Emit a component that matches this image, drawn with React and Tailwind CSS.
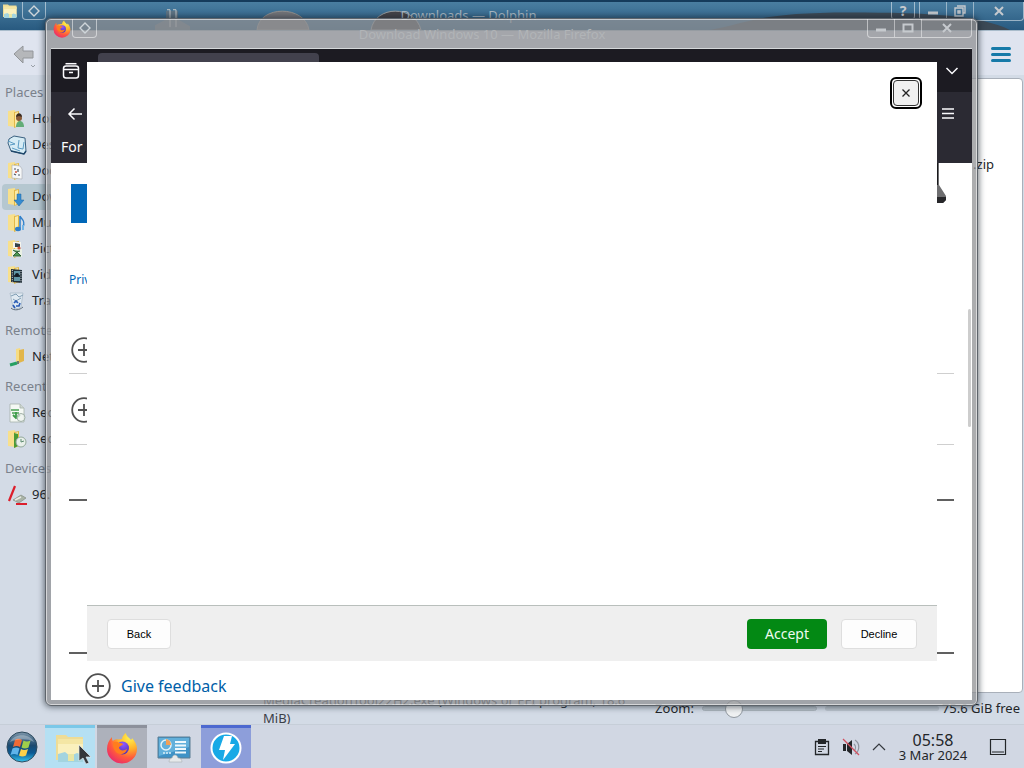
import React from "react";

function FolderIcon({ children }) {
  return (
    <svg viewBox="0 0 20 20" className="size-5 shrink-0" aria-hidden="true">
      <path d="M1 2l7-1v17l-7-1z" fill="#f8e08c" />
      <path d="M7 3l5-1v15l-5 2z" fill="#e2b848" />
      <path d="M8 4l3-1v13l-3 2z" fill="#fbeaa6" />
      {children}
    </svg>
  );
}

const HomeIcon = () => (
  <FolderIcon>
    <path d="M9 18c0-4 2-6 4-6s4 2 4 6z" fill="#63ad78" />
    <circle cx="12" cy="9" r="3" fill="#8a5c38" />
    <path d="M9 8c0-5 6-5 6 0l-3-1z" fill="#3b2b20" />
  </FolderIcon>
);

const DesktopIcon = () => (
  <svg viewBox="0 0 20 20" className="size-5 shrink-0" aria-hidden="true">
    <path d="M2 4l5-3 11 2 1 13-2 3-13-3-3-8z" fill="#d6ecf5" stroke="#3b6180" />
    <path d="M1 6l7 3-5 1M12 5l-1 8 5 1 1-7M5 13l8 3" fill="none" stroke="#5b9cc4" strokeWidth="1" />
    <path d="M4 16l13 3 2-3" fill="none" stroke="#20486b" strokeWidth="1.500" />
  </svg>
);

const DocumentsIcon = () => (
  <FolderIcon>
    <path d="M5 4l8 1 2 3v10l-10-1z" fill="#f5f7f8" stroke="#a7adb3" strokeWidth=".6" />
    <path d="M7 8h2M11 8v3M7 13l2 1M11 14h2" stroke="#4b5560" strokeWidth="1.200" />
    <circle cx="9" cy="11" r="1" fill="#d4543a" />
  </FolderIcon>
);

const DownloadsIcon = () => (
  <FolderIcon>
    <path d="M10 7h4v6h3l-5 6-5-6h3z" fill="#358cd1" stroke="#1d65a3" strokeWidth=".5" />
  </FolderIcon>
);

const MusicIcon = () => (
  <FolderIcon>
    <path d="M13 3v12M13 3c1 3 6 4 3 11" fill="none" stroke="#2f7fca" strokeWidth="1.500" />
    <ellipse cx="11" cy="16" rx="3" ry="2.200" fill="#2f7fca" />
    <path d="M16 12v5" stroke="#72b4e6" strokeWidth="2" />
  </FolderIcon>
);

const PicturesIcon = () => (
  <FolderIcon>
    <path d="M6 3h8v6H6z" fill="#f4f4ee" />
    <path d="M8 4l5 1v3H8z" fill="#34424a" />
    <path d="M5 10h10v8H5z" fill="#e9f0e4" />
    <path d="M6 11l3 2 4-1M6 17l4-4 4 4z" fill="#4f9a52" stroke="#305f3a" />
    <circle cx="12" cy="9" r="1.600" fill="#d05238" />
  </FolderIcon>
);

const VideosIcon = () => (
  <FolderIcon>
    <path d="M4 4l11 1v13l-11-1z" fill="#22303a" />
    <path d="M7 6h6v4H7zM7 12h6v4H7z" fill="#5f96a5" />
    <path d="M5.300 5v12M14 6v12" stroke="#d7dfdf" strokeDasharray="1 1.300" />
    <circle cx="10" cy="10" r="2" fill="#101a22" />
  </FolderIcon>
);

const TrashIcon = () => (
  <svg viewBox="0 0 20 20" className="size-5 shrink-0" aria-hidden="true">
    <path d="M3 2h13l-2 14c-2 2-6 2-8 0z" fill="#dfe9f1" stroke="#a9bac8" strokeWidth=".8" />
    <path d="M4 5l5-2 3 3 4-2M6 8l3 2 5-3" fill="none" stroke="#7f9db4" />
    <path d="M7 12l2-2 2 2M13 12l-1 3-3 0M6 14l2 3" fill="none" stroke="#2a5cb6" strokeWidth="1.700" />
    <path d="M4 17c3 3 9 2 12-1" fill="none" stroke="#5c6b79" />
  </svg>
);

const NetworkIcon = () => (
  <svg viewBox="0 0 20 20" className="size-5 shrink-0" aria-hidden="true">
    <path d="M9 2l4-1v13l-4 1z" fill="#f6dc83" />
    <path d="M12 3l5-1v12l-5 2z" fill="#e2b64b" />
    <path d="M11 14v3" stroke="#6c7d72" strokeWidth="2" />
    <path d="M3 18l7-2" stroke="#26a062" strokeWidth="3" />
  </svg>
);

const RecentFilesIcon = () => (
  <svg viewBox="0 0 20 20" className="size-5 shrink-0" aria-hidden="true">
    <path d="M3 1h10l4 4v14H3z" fill="#f4f8f4" stroke="#a6b1ab" strokeWidth=".8" />
    <path d="M13 1v4h4" fill="#cfd8d2" stroke="#a6b1ab" strokeWidth=".8" />
    <path d="M4 7h8M5 10h7" stroke="#73b67a" strokeWidth="2" />
    <path d="M9 9v5M6 12l3 3 4-3" fill="none" stroke="#3c9c48" strokeWidth="1.800" />
    <circle cx="14" cy="14.500" r="4" fill="#edf2ee" fillOpacity=".7" stroke="#9fb0a6" />
  </svg>
);

const RecentPlacesIcon = () => (
  <FolderIcon>
    <path d="M7 4l4 1v12l-4 2z" fill="#4b9b35" />
    <circle cx="14" cy="13" r="5" fill="#e8efe9" stroke="#93a99b" />
    <path d="M14 10v3l3-1" fill="none" stroke="#5d8b70" />
  </FolderIcon>
);

const DiskIcon = () => (
  <svg viewBox="0 0 20 20" className="size-5 shrink-0" aria-hidden="true">
    <path d="M6 15l8-5 5 3-7 5z" fill="#a9b3a6" stroke="#7d877a" strokeWidth=".6" />
    <path d="M8 15l6-3" stroke="#e8ece5" strokeWidth="1.500" />
    <path d="M8 1L2 16M9 19h11" stroke="#dc1f2c" strokeWidth="2.200" />
  </svg>
);

function FirefoxIcon({ className, id }) {
  return (
    <svg viewBox="0 0 32 32" className={className} aria-hidden="true">
      <defs>
        <radialGradient id={id + "-flame"} cx="75%" cy="15%" r="95%">
          <stop offset="0" stopColor="#fff44f" />
          <stop offset=".4" stopColor="#ffb02a" />
          <stop offset=".7" stopColor="#ff5a3c" />
          <stop offset="1" stopColor="#e92a6d" />
        </radialGradient>
        <radialGradient id={id + "-globe"} cx="55%" cy="20%" r="80%">
          <stop offset="0" stopColor="#9059ff" />
          <stop offset="1" stopColor="#4a2fb5" />
        </radialGradient>
      </defs>
      <path
        d="M20 1c0 3 3 4.500 5 7 1-1 1-2 1-2 3 3 5 7 5 11a15 14.500 0 0 1-30 0C1 12 3 8 6 5c0 2 0 3 1 4 1-1 3-2 5-1.500 2-.5 3 0 4-.5 0-2 2-5 4-6z"
        fill={"url(#" + id + "-flame)"}
      />
      <circle cx="16.500" cy="16" r="6.500" fill={"url(#" + id + "-globe)"} />
      <path d="M7 11c2-2 5-1 6 0 2 0 3 0 4 1-1 2-4 2-4 4 1 3 5 3 8 1-1 5-7 7-11 3-2-2-3-5-3-9z" fill="#ff7d1e" />
    </svg>
  );
}

const FoldersIcon = ({ className }) => (
  <svg viewBox="0 0 32 32" className={className} aria-hidden="true">
    <path d="M2 3h10l2 2h15v23H2z" fill="#eedc96" />
    <path d="M4 8h25v20H4z" fill="#faf0bd" />
    <path d="M4 7h25v5H4z" fill="#f4e6a4" />
    <path d="M4 22l7-2 5 4 7-3 6 2v7H4z" fill="#a3d4df" />
    <path d="M14 22h6v7h-6z" fill="#e9e6a4" />
  </svg>
);

const StartIcon = () => (
  <svg viewBox="0 0 32 32" className="size-8" aria-hidden="true">
    <defs>
      <linearGradient id="orb" x1="0" y1="0" x2="0" y2="1">
        <stop offset="0" stopColor="#7e97aa" />
        <stop offset=".45" stopColor="#1c4a70" />
        <stop offset=".7" stopColor="#0a5a94" />
        <stop offset="1" stopColor="#35c6ef" />
      </linearGradient>
    </defs>
    <circle cx="16" cy="16" r="15" fill="url(#orb)" stroke="#2d4a5e" />
    <path d="M9 9c3-2 5-1 7 0l-2 7c-2-1-4-1.500-7 0z" fill="#ee6a35" />
    <path d="M17.500 9.500c2 1 4 1.500 7 0l-2 7c-3 1.500-5 1-7 0z" fill="#9fce4b" />
    <path d="M6.500 17.500c3-1.500 5-1 7 0l-2 6.500c-2-1-4-1.500-7 0z" fill="#5fb4ea" />
    <path d="M15 18c2 1 4 1.500 7 0l-2 6.500c-3 1.500-5 1-7 0z" fill="#fbd04a" />
    <path d="M4 11C8 2 24 2 28 11c-7-4-17-3-24 0z" fill="#fff" fillOpacity=".3" />
  </svg>
);

const ControlPanelIcon = () => (
  <svg viewBox="0 0 34 32" className="h-8 w-9" aria-hidden="true">
    <path d="M1 5h32v21H1z" fill="#3f92c6" stroke="#5d7f94" />
    <path d="M2 6h30v9L2 24z" fill="#62b0db" />
    <circle cx="9" cy="13" r="5" fill="none" stroke="#e4f4fb" strokeWidth="1.500" />
    <path d="M9 13V7a6 6 0 0 1 5 6z" fill="#f0a058" />
    <path d="M18 10h11M18 13.500h11M18 17h11M18 20.500h11" stroke="#eef8fc" strokeWidth="2" />
    <path d="M6 21h8" stroke="#d7eef8" strokeWidth="1.500" strokeDasharray="2 1" />
    <path d="M12 30c0-3 2-4 3-4 1-4 5-4 6 0 2 0 4 1 4 4z" fill="#e6e9ea" stroke="#a7aeb2" strokeWidth=".6" />
  </svg>
);

const BoltIcon = () => (
  <svg viewBox="0 0 32 32" className="size-8" aria-hidden="true">
    <circle cx="16" cy="16" r="14.500" fill="#18a9e6" stroke="#fff" strokeWidth="2" />
    <path d="M14 4h8l-2 8h5L13 28l2-10H9z" fill="#fff" />
  </svg>
);

const PlusCircle = () => (
  <svg viewBox="0 0 26 26" className="size-[26px] shrink-0" fill="none" stroke="#505050" strokeWidth="1.800" aria-hidden="true">
    <circle cx="13" cy="13" r="11.800" />
    <path d="M13 7v12M7 13h12" />
  </svg>
);

const Diamond = () => (
  <svg viewBox="0 0 12 12" className="size-3" fill="none" stroke="#cfd6da" strokeWidth="1.400" aria-hidden="true">
    <path d="M6 1l5 5-5 5-5-5z" />
  </svg>
);

function Glyph({ kind }) {
  return (
    <svg viewBox="0 0 14 12" className="h-3 w-3.5" fill="none" stroke="#c6cace" strokeWidth="2" aria-hidden="true">
      {kind === "min" && <path d="M2 8h10" strokeWidth="3" />}
      {kind === "max" && <path d="M2.500 2.500h9v7h-9z" />}
      {kind === "restore" && (
        <g strokeWidth="1.400">
          <path d="M4 1h8v7h-2" />
          <path d="M2 3h8v8H2zM5 6h2v2H5z" />
        </g>
      )}
      {kind === "close" && <path d="M3 2l8 8M11 2l-8 8" />}
    </svg>
  );
}

function WindowButtons({ middle, label }) {
  const cell = "flex w-[27px] items-center justify-center border-r border-white/45";
  return (
    <div className="flex h-[19px] rounded-b border border-t-0 border-white/50">
      <button aria-label={"Minimize " + label} className={cell}><Glyph kind="min" /></button>
      <button aria-label={"Resize " + label} className={cell}><Glyph kind={middle} /></button>
      <button aria-label={"Close " + label} className="flex w-[49px] items-center justify-center"><Glyph kind="close" /></button>
    </div>
  );
}

const sections = [
  { title: "Places", items: [["Home", HomeIcon], ["Desktop", DesktopIcon], ["Documents", DocumentsIcon], ["Downloads", DownloadsIcon], ["Music", MusicIcon], ["Pictures", PicturesIcon], ["Videos", VideosIcon], ["Trash", TrashIcon]] },
  { title: "Remote", items: [["Network", NetworkIcon]] },
  { title: "Recent", items: [["Recent Files", RecentFilesIcon], ["Recent Locations", RecentPlacesIcon]] },
  { title: "Devices", items: [["96.0 GiB", DiskIcon]] },
];

function Sidebar() {
  return (
    <nav className="w-[200px] shrink-0 pt-px text-[13px]">
      {sections.map((s) => (
        <section key={s.title}>
          <h2 className="h-[30px] pt-[3px] pl-[5px] leading-[26px] text-[#7b828c]">{s.title}</h2>
          <ul>
            {s.items.map(([name, Icon]) => (
              <li key={name}>
                <a href="#" className={"ml-0.5 flex h-[26px] items-center gap-[5px] pl-[5px] " + (name === "Downloads" ? "rounded bg-[#b5c7d0]" : "")}>
                  <Icon />
                  {name}
                </a>
              </li>
            ))}
          </ul>
        </section>
      ))}
    </nav>
  );
}

function FileManager() {
  return (
    <div className="flex min-h-0 flex-1 flex-col">
      <header className="relative flex h-[31px] shrink-0 items-start border-t-2 border-b border-t-[#153b5c] border-b-[#a9bccb] bg-linear-to-b from-[#4a7ea1] to-[#285a80]">
        <svg className="absolute inset-0 size-full" viewBox="0 0 1024 29" preserveAspectRatio="none" aria-hidden="true">
          <path d="M155 24l11-6V9h12v9l12 7v4h-35z" fill="#75767a" fillOpacity=".6" />
          <path d="M167 8h3v18M173 8h3v18" stroke="#c5c8c9" fill="none" />
          <path d="M257 29c2-26 48-26 52 0z" fill="#74757a" stroke="#95928e" />
          <path d="M371 29c4-26 44-26 50 0z" fill="#454347" stroke="#9a9c9c" />
          <path d="M710 29c40-8 50-18 140-18 80 0 130 3 160 18z" fill="#3c4955" />
        </svg>
        <div className="relative flex w-full items-start">
          <FoldersIcon className="mt-px ml-0.5 h-4 w-4" />
          <button aria-label="Keep window in view" className="ml-1 flex h-[18px] w-6 items-center justify-center rounded-b border border-t-0 border-white/50"><Diamond /></button>
          <h1 className="flex-1 pt-1 text-center text-[13px] leading-[18px] text-[#a9b8c2]">Downloads — Dolphin</h1>
          <button aria-label="Help" className="mr-1 h-[18px] w-6 rounded-b border border-t-0 border-white/50 text-[14px] leading-[16px] font-bold text-[#c6cace]">?</button>
          <WindowButtons middle="restore" label="Dolphin" />
        </div>
      </header>
      <div className="flex h-11 shrink-0 items-start justify-between bg-[#dfe4ef] pt-3 pr-[13px] pl-3">
        <button aria-label="Back">
          <svg viewBox="0 0 26 26" className="size-[26px]" aria-hidden="true">
            <path d="M2 11L11 3v5h10v7H11v5z" fill="#b5b7ba" stroke="#93969a" />
            <path d="M19 22l2 2 2-2" fill="none" stroke="#9aa0a8" />
          </svg>
        </button>
        <button aria-label="Menu" className="flex flex-col gap-[3px] pt-1">
          <span className="h-[3px] w-5 rounded bg-[#167aa8]" />
          <span className="h-[3px] w-5 rounded bg-[#167aa8]" />
          <span className="h-[3px] w-5 rounded bg-[#167aa8]" />
        </button>
      </div>
      <div className="flex min-h-0 flex-1">
        <Sidebar />
        <main className="mt-[3px] mr-px flex flex-1 items-start justify-end rounded border border-[#a9b0ba] bg-white pt-[75px] pr-7 text-[13px] leading-5">.zip</main>
      </div>
      <footer className="flex h-[31px] shrink-0 items-center pr-1 pl-[263px] text-[13px]">
        <p className="max-w-[376px] flex-1 leading-[18px] text-[#3b4048]">MediaCreationTool22H2.exe (Windows or EFI program, 18.6 MiB)</p>
        <div className="ml-auto flex shrink-0 items-center gap-2">
          <label htmlFor="zoom">Zoom:</label>
          <input
            id="zoom"
            type="range"
            defaultValue="23"
            className="h-[18px] w-[115px] appearance-none bg-transparent [&::-webkit-slider-runnable-track]:h-[5px] [&::-webkit-slider-runnable-track]:rounded [&::-webkit-slider-runnable-track]:border [&::-webkit-slider-runnable-track]:border-[#acb5bd] [&::-webkit-slider-runnable-track]:bg-[#b9c2cb] [&::-webkit-slider-thumb]:-mt-[7px] [&::-webkit-slider-thumb]:size-[18px] [&::-webkit-slider-thumb]:appearance-none [&::-webkit-slider-thumb]:rounded-full [&::-webkit-slider-thumb]:border [&::-webkit-slider-thumb]:border-[#91989f] [&::-webkit-slider-thumb]:bg-[#eff1f2]"
          />
          <div className="flex items-center gap-[3px]">
            <span className="h-[5px] w-[114px] rounded bg-[#bcc5ce]" />
            <span>75.6 GiB free</span>
          </div>
        </div>
      </footer>
    </div>
  );
}

function Browser() {
  return (
    <section className="absolute top-[18px] right-[46px] bottom-[62px] left-[45px] flex flex-col rounded-md border border-[#5e646b] bg-[#909194]/75 px-[5px] pb-[5px] shadow-[0_0_6px_1px_rgba(20,30,40,0.6)] inset-ring inset-ring-white/55">
      <header className="flex h-[29px] shrink-0 items-start">
        <FirefoxIcon id="title-fox" className="mt-px ml-0.5 size-[18px]" />
        <button aria-label="Keep browser in view" className="ml-px flex h-[19px] w-[25px] items-center justify-center rounded-b border border-t-0 border-white/50"><Diamond /></button>
        <h2 className="flex-1 pt-1.5 text-center text-[13px] leading-[18px] text-[#b1b4b7]">Download Windows 10 — Mozilla Firefox</h2>
        <WindowButtons middle="max" label="Firefox" />
      </header>
      <div className="flex min-h-0 flex-1 flex-col border-t border-[#d5d8da] bg-white">
        <div className="flex h-[43px] shrink-0 items-start bg-[#1c1b22] pt-1 pr-[13px] pl-[11px]">
          <button aria-label="Recent browsing" className="mt-[9px]">
            <svg viewBox="0 0 18 18" className="size-[18px]" fill="none" stroke="#fbfbfe" strokeWidth="1.500" aria-hidden="true">
              <path d="M3.500 1.700h11" />
              <rect x="1.500" y="4" width="15" height="12" rx="2.500" />
              <path d="M2 7.500h14M7 10.500h4" />
            </svg>
          </button>
          <div className="ml-[18px] h-9 w-[221px] rounded bg-[#42414d]" />
          <button aria-label="List all tabs" className="mt-[11px] ml-auto">
            <svg viewBox="0 0 14 14" className="size-3.5" fill="none" stroke="#fbfbfe" strokeWidth="1.500" aria-hidden="true"><path d="M1.500 4L7 9.500 12.500 4" /></svg>
          </button>
        </div>
        <div className="flex h-10 shrink-0 items-center justify-between bg-[#2b2a33] pt-[3px] pr-4 pl-4">
          <button aria-label="Go back">
            <svg viewBox="0 0 16 16" className="size-4" fill="none" stroke="#fbfbfe" strokeWidth="1.500" aria-hidden="true"><path d="M15 8H2M7.500 2.500L2 8l5.500 5.500" /></svg>
          </button>
          <button aria-label="Application menu">
            <svg viewBox="0 0 16 16" className="size-4" stroke="#fbfbfe" strokeWidth="1.300" aria-hidden="true"><path d="M2 3h12M2 7.500h12M2 12h12" /></svg>
          </button>
        </div>
        <p className="h-[31px] shrink-0 bg-[#2b2a33] pt-1 pl-2.5 text-[14px] leading-[22px] text-[#fbfbfe]">For</p>
        <div className="flex min-h-0 flex-1 overflow-hidden">
          <div className="flex flex-1 flex-col pl-[18px]">
            <div className="flex items-start justify-between">
              <button aria-label="Download now" className="mt-[21px] ml-0.5 h-[39px] w-48 bg-[#0067b8]" />
              <svg viewBox="0 0 40 40" className="mr-[7px] size-10" aria-hidden="true">
                <path d="M0 0h32v22l7 11v4l-3 3H0z" fill="#6e6e70" />
                <path d="M29 0h2v22h-2z" fill="#19191c" />
                <path d="M0 34h39v3l-3 3H0z" fill="#27272a" />
              </svg>
            </div>
            <a href="#" className="mt-[47px] text-[12px] leading-5 text-[#0067b8]">Privacy</a>
            <button aria-label="Expand first section" className="mt-[47px] ml-0.5 self-start"><PlusCircle /></button>
            <hr className="mt-[10px] border-[#cfcfcf]" />
            <button aria-label="Expand second section" className="mt-[23px] ml-0.5 self-start"><PlusCircle /></button>
            <hr className="mt-[21px] border-[#cfcfcf]" />
            <hr className="mt-[54px] border-t-2 border-[#606060]" />
            <hr className="mt-[151px] border-t-2 border-[#606060]" />
            <a href="#" className="mt-[19px] ml-4 flex items-center gap-[10px] self-start text-[16px] leading-6 text-[#0060a8]">
              <PlusCircle />
              Give feedback
            </a>
          </div>
          <div className="flex w-[18px] shrink-0 justify-end pt-[146px] pr-px">
            <span className="h-[118px] w-[3px] rounded bg-[#cdcdcd]" />
          </div>
        </div>
      </div>
    </section>
  );
}

function InstallerDialog() {
  const plain = "h-[30px] rounded border border-[#dedede] bg-[#fdfdfd] font-['Liberation_Sans',sans-serif] text-[11px] text-black";
  return (
    <div role="dialog" aria-label="License terms" className="absolute top-[62px] right-[87px] bottom-[107px] left-[87px] flex flex-col bg-white">
      <div className="flex flex-1 items-start justify-end pt-[15px] pr-[15px]">
        <button aria-label="Close dialog" className="flex size-8 items-center justify-center rounded-md border-2 border-black bg-white">
          <span className="flex size-[26px] items-center justify-center rounded border border-[#333] bg-[#f0f0f0]">
            <svg viewBox="0 0 10 10" className="size-2.5" stroke="#222" strokeWidth="1.300" aria-hidden="true"><path d="M1.500 1.500l7 7M8.500 1.500l-7 7" /></svg>
          </span>
        </button>
      </div>
      <footer className="flex h-14 items-start border-t border-[#b9bfbc] bg-[#efefef] px-5 pt-[13px]">
        <button className={plain + " w-16"}>Back</button>
        <button className="ml-auto h-[30px] w-20 rounded bg-[#038914] text-[14px] leading-5 text-[#eefbef]">Accept</button>
        <button className={plain + " ml-3.5 w-[76px]"}>Decline</button>
      </footer>
    </div>
  );
}

function Taskbar() {
  const task = "flex h-full w-[50px] items-center justify-center border-t-[3px]";
  return (
    <footer className="flex h-11 shrink-0 items-center border-t border-[#c6ced8] bg-[#d1d7e3]">
      <button aria-label="Start" className="flex w-[45px] justify-center pr-0.5"><StartIcon /></button>
      <div className="flex h-full gap-0.5">
        <button aria-label="Dolphin" className={task + " relative border-[#7bc8e8] bg-[#b5e0f3]"}>
          <FoldersIcon className="size-8" />
          <svg viewBox="0 0 14 21" className="absolute top-4 left-[33px] h-[21px] w-3.5" aria-hidden="true">
            <path d="M1 1v16l4-3 3 6 3-1-3-6h5z" fill="#34373a" stroke="#e3eaee" strokeWidth=".7" />
          </svg>
        </button>
        <button aria-label="Firefox" className={task + " border-[#8d919c] bg-[#adb1bb]"}><FirefoxIcon id="task-fox" className="size-8" /></button>
        <button aria-label="Control panel" className={task + " border-transparent"}><ControlPanelIcon /></button>
        <button aria-label="Daemon" className={task + " border-[#4d69d0] bg-[#8d9eda]"}><BoltIcon /></button>
      </div>
      <div className="ml-auto flex items-center pr-[17px]">
        <button aria-label="Clipboard">
          <svg viewBox="0 0 16 18" className="h-[18px] w-4" aria-hidden="true">
            <path d="M1.500 3.500h13v13h-13z" fill="none" stroke="#232629" strokeWidth="1.300" />
            <path d="M4 1h8v5H4z" fill="#232629" />
            <path d="M4 8.500h8M4 11h6M4 13.500h4" stroke="#232629" />
          </svg>
        </button>
        <button aria-label="Volume muted" className="ml-3">
          <svg viewBox="0 0 18 18" className="size-[18px]" aria-hidden="true">
            <path d="M1 6h3v7H1zM5 6l5-4v15l-5-4z" fill="#232629" />
            <path d="M12 6c2 2 2 5 0 7M13 2c5 3 5 11 0 14" fill="none" stroke="#8f959e" strokeWidth="1.200" />
            <path d="M1 1l16 16" stroke="#d2505f" strokeWidth="1.300" />
          </svg>
        </button>
        <button aria-label="Show hidden icons" className="ml-3">
          <svg viewBox="0 0 14 14" className="size-3.5" fill="none" stroke="#34383e" strokeWidth="1.200" aria-hidden="true"><path d="M1 10l6-6 6 6" /></svg>
        </button>
        <button className="ml-3 flex w-[70px] flex-col items-center">
          <span className="text-[16px] leading-4">05:58</span>
          <span className="text-[13px] leading-[14px] whitespace-nowrap">3 Mar 2024</span>
        </button>
        <button aria-label="Show desktop" className="ml-[21px]">
          <svg viewBox="0 0 18 18" className="size-[18px]" fill="none" stroke="#232629" strokeWidth="1.200" aria-hidden="true"><path d="M1.500 1.500h15v15h-15zM3 14h12" /></svg>
        </button>
      </div>
    </footer>
  );
}

export default function App() {
  return (
    <div className="relative flex h-screen min-h-[600px] flex-col overflow-hidden bg-[#d3dbe6] font-['Noto_Sans',sans-serif] text-[#232629]">
      <FileManager />
      <Browser />
      <InstallerDialog />
      <Taskbar />
    </div>
  );
}
